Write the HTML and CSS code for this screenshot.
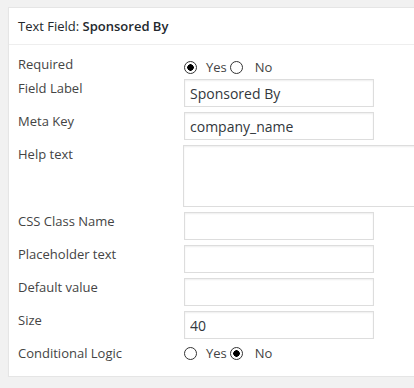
FILE: index.html
```html
<!DOCTYPE html>
<html lang="en">
<head>
    <meta charset="UTF-8">
    <title>Text Field</title>
    <link rel="stylesheet" href="styles.css">
</head>
<body>

<div class="postbox">
    <h3 class="hndle">Text Field: <strong>Sponsored By</strong></h3>
    <div class="inside">
        <div class="form-row">
            <label class="form-label">Required</label>
            <div class="radios radios-top">
                <label class="opt-yes"><input type="radio" name="required" checked>Yes</label>
                <label class="opt-no"><input type="radio" name="required">No</label>
            </div>
        </div>
        <div class="form-row">
            <label class="form-label" for="field-label">Field Label</label>
            <input type="text" id="field-label" class="smallfield" value="Sponsored By">
        </div>
        <div class="form-row">
            <label class="form-label" for="meta-key">Meta Key</label>
            <input type="text" id="meta-key" class="smallfield" value="company_name">
        </div>
        <div class="form-row">
            <label class="form-label" for="help-text">Help text</label>
            <textarea id="help-text" class="help"></textarea>
        </div>
        <div class="form-row">
            <label class="form-label" for="css-class">CSS Class Name</label>
            <input type="text" id="css-class" class="smallfield">
        </div>
        <div class="form-row">
            <label class="form-label" for="placeholder">Placeholder text</label>
            <input type="text" id="placeholder" class="smallfield">
        </div>
        <div class="form-row">
            <label class="form-label" for="default">Default value</label>
            <input type="text" id="default" class="smallfield">
        </div>
        <div class="form-row">
            <label class="form-label" for="size">Size</label>
            <input type="text" id="size" class="smallfield" value="40">
        </div>
        <div class="form-row">
            <label class="form-label">Conditional Logic</label>
            <div class="radios radios-bottom">
                <label class="opt-yes"><input type="radio" name="conditional">Yes</label>
                <label class="opt-no"><input type="radio" name="conditional" checked>No</label>
            </div>
        </div>
    </div>
</div>

</body>
</html>
```

FILE: styles.css
```css
body {
    margin: 0;
    padding: 7px 0 0 8px;
    background-color: #f1f1f1;
    font-family: 'Open Sans', sans-serif;
    font-size: 13px;
    color: #444;
    overflow: hidden;
}

.postbox {
    width: calc(100vw - 8px);
    box-sizing: border-box;
    overflow: hidden;
    background-color: #fff;
    border: 1px solid #e5e5e5;
    border-right: 0;
    box-shadow: 0 1px 1px rgba(0, 0, 0, 0.04);
}

.hndle {
    margin: 0;
    padding: 0 9px;
    height: 36px;
    line-height: 36px;
    font-size: 13px;
    font-weight: normal;
    color: #23282d;
    border-bottom: 1px solid #eee;
}

.hndle strong {
    font-weight: 600;
}

.inside {
    padding: 10px 9px 14px;
    display: flex;
    flex-direction: column;
    gap: 5px;
}

.form-row {
    display: grid;
    grid-template-columns: 166px 1fr;
    align-items: start;
}

.form-label {
    line-height: 18px;
}

.smallfield {
    box-sizing: border-box;
    width: 190px;
    height: 28px;
    margin: 0;
    padding: 3px 5px;
    border: 1px solid #ddd;
    box-shadow: inset 0 1px 2px rgba(0, 0, 0, 0.07);
    font-family: 'Open Sans', sans-serif;
    font-size: 14px;
    color: #32373c;
    outline: none;
}

.help {
    box-sizing: border-box;
    width: 260px;
    height: 62px;
    margin: 0 0 0 -1px;
    border: 1px solid #ddd;
    box-shadow: inset 0 1px 2px rgba(0, 0, 0, 0.07);
    resize: none;
}

.radios {
    display: flex;
    align-items: center;
    line-height: 14px;
}

.radios-top {
    padding-top: 5px;
}

.radios-bottom {
    padding-top: 2px;
}

.radios label {
    display: flex;
    align-items: center;
}

.radios input {
    -webkit-appearance: none;
    appearance: none;
    box-sizing: border-box;
    width: 13px;
    height: 13px;
    margin: 0 9px 0 0;
    border: 1px solid #333;
    border-radius: 50%;
    background-color: #fff;
}

.radios .opt-yes {
    margin-right: 3px;
}

.radios .opt-no input {
    margin-right: 12px;
}

.radios input:checked {
    background: radial-gradient(circle, #000 0, #000 3px, #fff 3.5px);
}
```
